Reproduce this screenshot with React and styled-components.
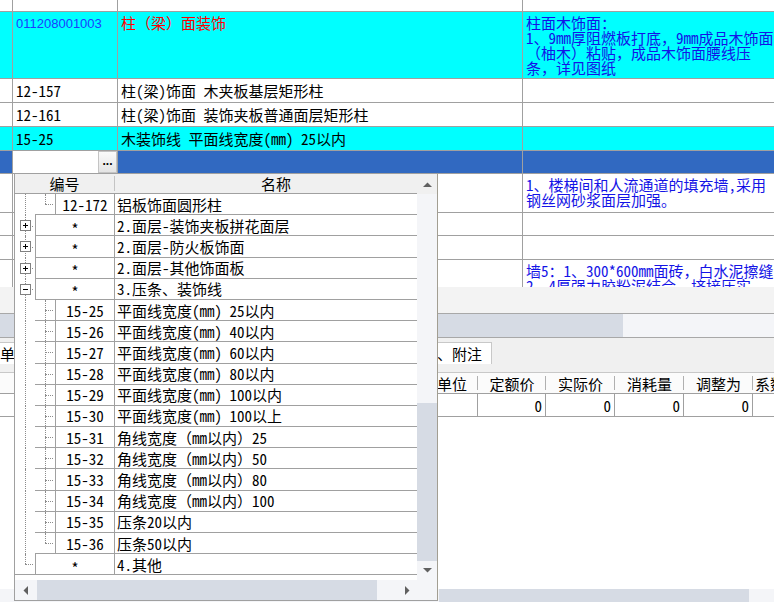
import React from 'react';
import styled, { createGlobalStyle } from 'styled-components';

const LINE = '#a0a0a0';
const CYAN = '#00ffff';
const SELECT = '#3169c1';
const THUMB = '#d6dbe4';
const TRACK = '#f4f5f8';
const CJK = '"Noto Sans CJK SC", "Noto Sans", sans-serif';
const BCOLS = '111px 50px 170px 95px 52px 68px 69px 69px 69px 69px';

const GlobalStyle = createGlobalStyle`
  html, body { margin: 0; padding: 0; background: #fff; }
  body { font-family: ${CJK}; }
`;

const topRows = [
  { h: 12 },
  {
    h: 67, bg: CYAN, top: true, bill: '011208001003', name: '柱（梁）面装饰', nameColor: '#ff0000',
    desc: ['柱面木饰面：', '1、9mm厚阻燃板打底，9mm成品木饰面', '（柚木）粘贴，成品木饰面腰线压', '条，详见图纸'],
  },
  { h: 24, code: '12-157', name: '柱(梁)饰面 木夹板基层矩形柱' },
  { h: 24, code: '12-161', name: '柱(梁)饰面 装饰夹板普通面层矩形柱' },
  { h: 24, bg: CYAN, code: '15-25', name: '木装饰线 平面线宽度(mm) 25以内' },
  { h: 23, bg: SELECT, editing: true },
  { h: 39, top: true, desc: ['1、楼梯间和人流通道的填充墙,采用', '钢丝网砂浆面层加强。'] },
  { h: 23 },
  { h: 24 },
  { h: 28, top: true, desc: ['墙5：1、300*600mm面砖，白水泥擦缝', '2、4厚强力胶粉泥结合, 挤接压实'] },
];

const items = [
  { lvl: 2, line: 'elbow', code: '12-172', name: '铝板饰面圆形柱' },
  { lvl: 1, exp: 'closed', code: '*', name: '2.面层-装饰夹板拼花面层' },
  { lvl: 1, exp: 'closed', code: '*', name: '2.面层-防火板饰面' },
  { lvl: 1, exp: 'closed', code: '*', name: '2.面层-其他饰面板' },
  { lvl: 1, exp: 'open', code: '*', name: '3.压条、装饰线' },
  { lvl: 2, line: 'tee', code: '15-25', name: '平面线宽度(mm) 25以内' },
  { lvl: 2, line: 'tee', code: '15-26', name: '平面线宽度(mm) 40以内' },
  { lvl: 2, line: 'tee', code: '15-27', name: '平面线宽度(mm) 60以内' },
  { lvl: 2, line: 'tee', code: '15-28', name: '平面线宽度(mm) 80以内' },
  { lvl: 2, line: 'tee', code: '15-29', name: '平面线宽度(mm) 100以内' },
  { lvl: 2, line: 'tee', code: '15-30', name: '平面线宽度(mm) 100以上' },
  { lvl: 2, line: 'tee', code: '15-31', name: '角线宽度（mm以内）25' },
  { lvl: 2, line: 'tee', code: '15-32', name: '角线宽度（mm以内）50' },
  { lvl: 2, line: 'tee', code: '15-33', name: '角线宽度（mm以内）80' },
  { lvl: 2, line: 'tee', code: '15-34', name: '角线宽度（mm以内）100' },
  { lvl: 2, line: 'tee', code: '15-35', name: '压条20以内' },
  { lvl: 2, line: 'elbow', code: '15-36', name: '压条50以内' },
  { lvl: 1, last: true, code: '*', name: '4.其他' },
];

// tabs under the drop-down are covered, only their edges show
const tabs = [
  { label: '清单', first: true },
  { label: '', w: 89 },
  { label: '', w: 89 },
  { label: '', w: 89 },
  { label: '', w: 88 },
  { label: '、附注', w: 120, active: true },
];

const bottomCols = ['', '', '', '', '单位', '定额价', '实际价', '消耗量', '调整为', '系数'];
const bottomVals = ['', '', '', '', '', '0', '0', '0', '0', ''];

// ASCII runs get half-width glyphs, like the bitmap font of the original
function Txt({ children }) {
  if (children === undefined || children === null || children === '') return null;
  const parts = String(children).split(/([\x20-\x7e]+)/);
  return parts.map((p, i) =>
    /^[\x20-\x7e]+$/.test(p) ? <Half key={i}>{p}</Half> : p
  );
}

function Triangle({ dir }) {
  const pts = {
    up: '0,5 4.5,0.5 9,5',
    down: '0,0 4.5,4.5 9,0',
    left: '5,0 0.5,4.5 5,9',
    right: '0,0 4.5,4.5 0,9',
  }[dir];
  const vertical = dir === 'up' || dir === 'down';
  return (
    <svg width={vertical ? 9 : 5} height={vertical ? 5 : 9} viewBox={vertical ? '0 0 9 5' : '0 0 5 9'}>
      <polygon points={pts} fill="#606060" />
    </svg>
  );
}

function Expander({ open }) {
  return (
    <ExpBox width="11" height="11" viewBox="0 0 11 11">
      <rect x="0.5" y="0.5" width="10" height="10" fill="#fff" stroke="#808080" />
      <path d="M3 5.5h5" stroke="#000" />
      {!open && <path d="M5.5 3v5" stroke="#000" />}
    </ExpBox>
  );
}

function TopRow({ row }) {
  return (
    <GridRow $h={row.h} $bg={row.bg}>
      <Cell />
      {row.editing ? (
        <Cell $flat>
          <EditBox />
          <DotButton>...</DotButton>
        </Cell>
      ) : (
        <Cell $top={row.top}>
          {row.bill ? <BillCode>{row.bill}</BillCode> : <span><Txt>{row.code}</Txt></span>}
        </Cell>
      )}
      <Cell $top={row.top} $color={row.nameColor}>
        <span><Txt>{row.name}</Txt></span>
      </Cell>
      <Cell $top={row.top} $color="#1414e6" $last>
        {row.desc && row.desc.map((l) => <DescLine key={l}><Txt>{l}</Txt></DescLine>)}
      </Cell>
    </GridRow>
  );
}

function TreeItem({ item }) {
  return (
    <TreeRow>
      <Guide $kind={item.last ? 'elbow' : item.lvl === 1 ? 'tee' : 'pipe'} $ruled={item.last}>
        {item.exp && <Expander open={item.exp === 'open'} />}
      </Guide>
      {item.lvl === 2 && <Guide $kind={item.line} $ruled />}
      <CodeCell $w={item.lvl === 2 ? 59 : 79}>
        {item.code === '*' ? <Star>*</Star> : <Txt>{item.code}</Txt>}
      </CodeCell>
      <NameCell><span><Txt>{item.name}</Txt></span></NameCell>
    </TreeRow>
  );
}

export default function App() {
  return (
    <Page>
      <GlobalStyle />
      <TopGrid>
        {topRows.map((r, i) => <TopRow key={i} row={r} />)}
      </TopGrid>
      <GapPanel />
      <PageHScroll>
        <PageThumb $w={623} />
      </PageHScroll>
      <TabStrip>
        {tabs.map((t, i) => (
          <Tab key={i} $first={t.first} $w={t.w} $active={t.active}>{t.label}</Tab>
        ))}
      </TabStrip>
      <BottomHead>
        {bottomCols.map((c, i) => <HCell key={i} $left={i === bottomCols.length - 1}>{c}</HCell>)}
      </BottomHead>
      <BottomData>
        {bottomVals.map((v, i) => <DCell key={i}><Txt>{v}</Txt></DCell>)}
      </BottomData>
      <WhiteArea />
      <BottomScroll>
        <PageThumb $w={310} $from={439} />
      </BottomScroll>

      <Dropdown>
        <DropBody>
          <List>
            <ListHeader>
              <HeadCell $w={99}>编号</HeadCell>
              <HeadSep />
              <HeadCell $pad={20}>名称</HeadCell>
            </ListHeader>
            {items.map((it, i) => <TreeItem key={i} item={it} />)}
          </List>
          <VScroll>
            <ArrowBox $bg="#f0f0f0"><Triangle dir="up" /></ArrowBox>
            <Spacer />
            <VThumb />
            <ArrowBox $h={19}><Triangle dir="down" /></ArrowBox>
          </VScroll>
        </DropBody>
        <DropFooter>
          <HScroll>
            <ArrowBox><Triangle dir="left" /></ArrowBox>
            <HThumb />
            <Spacer />
            <ArrowBox><Triangle dir="right" /></ArrowBox>
          </HScroll>
          <Corner />
        </DropFooter>
      </Dropdown>
    </Page>
  );
}

const Page = styled.div`
  position: relative;
  width: 774px;
  height: 602px;
  overflow: hidden;
  display: flex;
  flex-direction: column;
  background: #fff;
  font-family: ${CJK};
  font-size: 15px;
  color: #000;
`;

const Half = styled.span`
  font-feature-settings: "hwid" 1;
`;

const TopGrid = styled.div`
  height: 287px;
  flex: none;
  overflow: hidden;
`;

const GridRow = styled.div`
  display: grid;
  grid-template-columns: 13px 105px 405px 251px;
  height: ${(p) => p.$h}px;
  background: ${(p) => p.$bg || '#fff'};
`;

const Cell = styled.div`
  box-sizing: border-box;
  border-right: ${(p) => (p.$last ? 'none' : `1px solid ${LINE}`)};
  border-bottom: 1px solid ${LINE};
  overflow: hidden;
  white-space: nowrap;
  display: flex;
  flex-direction: ${(p) => (p.$flat ? 'row' : 'column')};
  justify-content: ${(p) => (p.$top || p.$flat ? 'flex-start' : 'center')};
  padding: ${(p) => (p.$flat ? '0' : p.$top ? '3px 0 0 3px' : '0 0 0 3px')};
  line-height: 15px;
  color: ${(p) => p.$color || '#000'};
`;

const BillCode = styled.span`
  font-family: "Liberation Sans", Arial, sans-serif;
  font-size: 13px;
  color: #1c3cff;
  padding-top: 1px;
`;

const DescLine = styled.span`
  display: block;
`;

const EditBox = styled.div`
  flex: 1;
  background: #fff;
`;

const DotButton = styled.div`
  width: 19px;
  box-sizing: border-box;
  background: linear-gradient(#fafafa, #e4e4e4);
  border: 1px solid #c4c4c4;
  display: flex;
  align-items: center;
  justify-content: center;
  font-family: "Liberation Sans", Arial, sans-serif;
  font-weight: bold;
  font-size: 12px;
  line-height: 12px;
  padding-bottom: 3px;
`;

const GapPanel = styled.div`
  height: 26px;
  flex: none;
  background: #f3f3f3;
`;

const PageHScroll = styled.div`
  height: 25px;
  flex: none;
  box-sizing: border-box;
  border-top: 1px solid #a8a8a8;
  border-bottom: 1px solid #a8a8a8;
  background: ${TRACK};
  display: flex;
`;

const PageThumb = styled.div`
  width: ${(p) => p.$w}px;
  margin-left: ${(p) => p.$from || 0}px;
  background: ${THUMB};
`;

const TabStrip = styled.div`
  height: 34px;
  flex: none;
  box-sizing: border-box;
  padding-top: 4px;
  background: #f0f0f0;
  display: flex;
  align-items: flex-start;
`;

const Tab = styled.div`
  height: 22px;
  flex: none;
  box-sizing: border-box;
  width: ${(p) => (p.$w ? `${p.$w}px` : 'auto')};
  margin-left: ${(p) => (p.$first ? '-20px' : '0')};
  padding: 0 ${(p) => (p.$first ? '1px' : p.$active ? '9px' : '4px')} 0 4px;
  border: 1px solid #c8c8c8;
  border-bottom: none;
  background: #fff;
  display: flex;
  align-items: center;
  justify-content: ${(p) => (p.$active ? 'flex-end' : 'flex-start')};
  line-height: 15px;
  white-space: nowrap;
  overflow: hidden;
`;

const BottomHead = styled.div`
  display: grid;
  grid-template-columns: ${BCOLS};
  height: 22px;
  flex: none;
  box-sizing: border-box;
  border-top: 1px solid #c8c8c8;
  border-bottom: 1px solid ${LINE};
  background: #fbfbfb;
`;

const HCell = styled.div`
  position: relative;
  display: flex;
  align-items: center;
  justify-content: ${(p) => (p.$left ? 'flex-start' : 'center')};
  padding-left: ${(p) => (p.$left ? '2px' : '0')};
  line-height: 15px;
  white-space: nowrap;
  overflow: hidden;
  &::after {
    content: '';
    position: absolute;
    right: 0;
    top: 3px;
    bottom: 3px;
    border-right: 1px solid #b0b0b0;
  }
`;

const BottomData = styled.div`
  display: grid;
  grid-template-columns: ${BCOLS};
  height: 23px;
  flex: none;
`;

const DCell = styled.div`
  box-sizing: border-box;
  border-right: 1px solid ${LINE};
  border-bottom: 1px solid ${LINE};
  display: flex;
  align-items: center;
  justify-content: flex-end;
  padding-right: 3px;
  line-height: 15px;
`;

const WhiteArea = styled.div`
  flex: 1;
  background: #fff;
`;

const BottomScroll = styled.div`
  height: 13px;
  flex: none;
  display: flex;
  background: ${TRACK};
`;

const Dropdown = styled.div`
  position: absolute;
  left: 14px;
  top: 173px;
  width: 424px;
  height: 428px;
  box-sizing: border-box;
  border: 1px solid ${LINE};
  border-right-color: #a29e92;
  background: #fff;
  display: flex;
  flex-direction: column;
`;

const DropBody = styled.div`
  flex: 1;
  min-height: 0;
  display: flex;
`;

const List = styled.div`
  width: 402px;
  flex: none;
  display: flex;
  flex-direction: column;
  overflow: hidden;
`;

const ListHeader = styled.div`
  height: 20px;
  flex: none;
  box-sizing: border-box;
  display: flex;
  border-bottom: 1px solid ${LINE};
  background: #f0f0f0;
`;

const HeadCell = styled.div`
  width: ${(p) => (p.$w ? `${p.$w}px` : 'auto')};
  flex: ${(p) => (p.$w ? 'none' : 1)};
  padding-left: ${(p) => p.$pad || 0}px;
  display: flex;
  align-items: center;
  justify-content: center;
  line-height: 15px;
`;

const HeadSep = styled.div`
  width: 1px;
  margin: 2px 0;
  background: #c4c4c4;
`;

const TreeRow = styled.div`
  display: flex;
  height: 21.2px;
  flex: none;
`;

const Guide = styled.div`
  position: relative;
  width: 20px;
  flex: none;
  box-sizing: border-box;
  display: flex;
  align-items: center;
  padding-left: 5px;
  border-bottom: ${(p) => (p.$ruled ? `1px solid ${LINE}` : 'none')};
  &::before {
    content: '';
    position: absolute;
    left: 10px;
    top: 0;
    height: ${(p) => (p.$kind === 'elbow' ? '50%' : '100%')};
    border-left: 1px dotted #8c8c8c;
  }
  &::after {
    content: '';
    display: ${(p) => (p.$kind === 'pipe' ? 'none' : 'block')};
    position: absolute;
    left: 10px;
    top: 50%;
    width: 8px;
    border-top: 1px dotted #8c8c8c;
  }
`;

const ExpBox = styled.svg`
  position: relative;
  z-index: 1;
`;

const CodeCell = styled.div`
  width: ${(p) => p.$w}px;
  flex: none;
  box-sizing: border-box;
  border-left: 1px solid ${LINE};
  border-bottom: 1px solid ${LINE};
  display: flex;
  align-items: center;
  justify-content: center;
  line-height: 15px;
`;

const Star = styled.span`
  display: inline-block;
  transform: translateY(3px);
`;

const NameCell = styled.div`
  flex: 1;
  box-sizing: border-box;
  border-left: 1px solid ${LINE};
  border-bottom: 1px solid ${LINE};
  display: flex;
  align-items: center;
  padding-left: 2px;
  line-height: 15px;
  white-space: nowrap;
  overflow: hidden;
`;

const VScroll = styled.div`
  width: 20px;
  flex: none;
  display: flex;
  flex-direction: column;
  background: ${TRACK};
`;

const ArrowBox = styled.div`
  width: 20px;
  height: ${(p) => p.$h || 20}px;
  flex: none;
  display: flex;
  align-items: center;
  justify-content: center;
  background: ${(p) => p.$bg || 'transparent'};
`;

const Spacer = styled.div`
  flex: 1;
`;

const VThumb = styled.div`
  height: 158px;
  flex: none;
  background: ${THUMB};
`;

const DropFooter = styled.div`
  height: 20px;
  flex: none;
  display: flex;
`;

const HScroll = styled.div`
  width: 402px;
  display: flex;
  background: ${TRACK};
`;

const HThumb = styled.div`
  width: 340px;
  margin-left: 2px;
  background: ${THUMB};
`;

const Corner = styled.div`
  width: 20px;
  background: ${TRACK};
`;
